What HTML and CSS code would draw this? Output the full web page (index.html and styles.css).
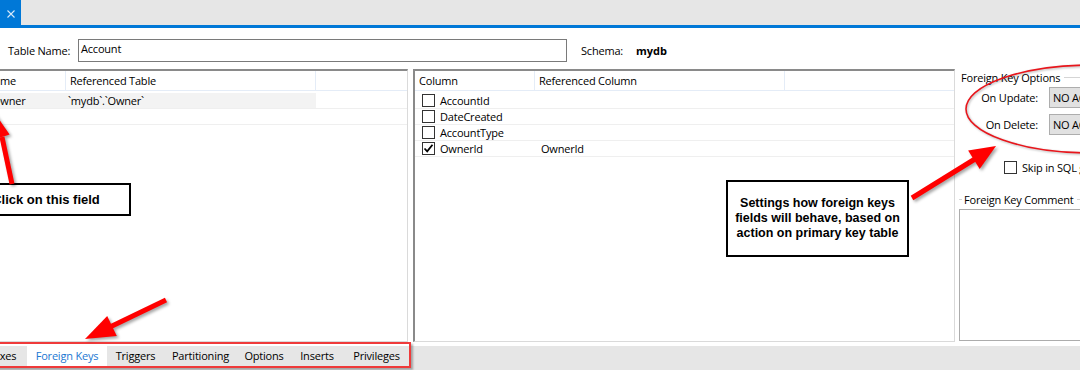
FILE: index.html
```html
<!DOCTYPE html>
<html>
<head>
<meta charset="utf-8">
<title>Table Editor</title>
<link rel="stylesheet" href="styles.css">
</head>
<body>
<div class="app">
  <div class="doc-strip">
    <div class="doc-tab">
      <svg class="close-x" width="8" height="8" viewBox="0 0 8 8"><path d="M0.5 0.5L7.5 7.5M7.5 0.5L0.5 7.5"/></svg>
    </div>
  </div>
  <div class="accent"></div>

  <div class="name-bar">
    <span class="name-lbl">Table Name:</span>
    <div class="text-input">Account</div>
    <span class="schema-lbl">Schema:</span>
    <span class="schema-val">mydb</span>
  </div>

  <div class="main">
    <div class="grid left-grid">
      <div class="grid-head">
        <div class="cell lc-name">Name</div>
        <div class="cell lc-ref">Referenced Table</div>
        <div class="cell c-fill"></div>
      </div>
      <div class="grid-body">
        <div class="grid-row">
          <div class="cell lc-name sel"><span class="fk-name">Owner</span></div>
          <div class="cell lc-ref sel row-ref">`mydb`.`Owner`</div>
          <div class="cell c-fill"></div>
        </div>
        <div class="grid-row">
          <div class="cell lc-name"></div>
          <div class="cell lc-ref"></div>
          <div class="cell c-fill"></div>
        </div>
      </div>
    </div>

    <div class="grid mid-grid">
      <div class="grid-head">
        <div class="cell mc-col">Column</div>
        <div class="cell mc-ref">Referenced Column</div>
        <div class="cell c-fill"></div>
      </div>
      <div class="grid-body">
        <div class="grid-row">
          <div class="cell mc-col"><span class="chk"></span>AccountId</div>
          <div class="cell mc-ref"></div>
          <div class="cell c-fill"></div>
        </div>
        <div class="grid-row">
          <div class="cell mc-col"><span class="chk"></span>DateCreated</div>
          <div class="cell mc-ref"></div>
          <div class="cell c-fill"></div>
        </div>
        <div class="grid-row">
          <div class="cell mc-col"><span class="chk"></span>AccountType</div>
          <div class="cell mc-ref"></div>
          <div class="cell c-fill"></div>
        </div>
        <div class="grid-row">
          <div class="cell mc-col"><span class="chk checked"><svg width="11" height="11" viewBox="0 0 11 11"><path d="M1.5 5.5L4.2 8.3L9.5 1.8"/></svg></span>OwnerId</div>
          <div class="cell mc-ref">OwnerId</div>
          <div class="cell c-fill"></div>
        </div>
      </div>
    </div>

    <div class="side">
      <div class="legend-row">
        <span class="legend-text">Foreign Key Options</span>
        <span class="legend-line"></span>
      </div>
      <div class="opt-row first">
        <span class="opt-lbl">On Update:</span>
        <div class="combo">NO ACTION</div>
      </div>
      <div class="opt-row">
        <span class="opt-lbl">On Delete:</span>
        <div class="combo">NO ACTION</div>
      </div>
      <div class="skip-row">
        <span class="chk"></span>
        <span class="skip-text">Skip in SQL generation</span>
      </div>
      <div class="legend-row comment-legend">
        <span class="legend-dash"></span>
        <span class="legend-text">Foreign Key Comment</span>
        <span class="legend-line"></span>
      </div>
      <div class="comment-box"></div>
    </div>
  </div>

  <div class="tabbar">
    <div class="tab t-idx">Indexes</div>
    <div class="tab t-fk active">Foreign Keys</div>
    <div class="tab t-trg">Triggers</div>
    <div class="tab t-part">Partitioning</div>
    <div class="tab t-opt">Options</div>
    <div class="tab t-ins">Inserts</div>
    <div class="tab t-priv">Privileges</div>
  </div>

  <!-- annotations drawn over the screenshot -->
  <div class="tab-highlight"></div>
  <div class="callout callout-click">Click on this field</div>
  <div class="callout callout-settings">Settings how foreign keys<br>fields will behave, based on<br>action on primary key table</div>

  <svg class="anno" width="1080" height="370" viewBox="0 0 1080 370">
    <ellipse class="ring" cx="1092" cy="109" rx="126" ry="44"/>
    <g class="arrow">
      <line x1="12" y1="184" x2="2" y2="137"/>
      <polygon points="-6,112 9.6,134.6 -5.6,139.4"/>
    </g>
    <g class="arrow">
      <line x1="912" y1="198" x2="975" y2="159"/>
      <polygon points="996,146 979.7,169.1 968.1,150.4"/>
    </g>
    <g class="arrow">
      <line x1="166" y1="300" x2="111" y2="326.5"/>
      <polygon points="85,339 116.8,335.9 107.2,316.1"/>
    </g>
  </svg>
</div>
</body>
</html>
```

FILE: styles.css
```css
* { box-sizing: border-box; }

html, body {
  margin: 0;
  padding: 0;
  width: 1080px;
  height: 370px;
  overflow: hidden;
  background: #ffffff;
}

body {
  font-family: "Open Sans", "Noto Sans", sans-serif;
  font-size: 11px;
  letter-spacing: -0.2px;
  color: #000;
}

.app {
  position: relative;
  width: 1080px;
  height: 370px;
  overflow: hidden;
}

/* ---------- top document strip ---------- */
.doc-strip {
  height: 25px;
  background: #e6e6e6;
  display: flex;
}
.doc-tab {
  width: 21px;
  background: #0078d7;
  display: flex;
  align-items: center;
  justify-content: center;
  padding-top: 3px;
}
.close-x path {
  stroke: #d8eafa;
  stroke-width: 1.1;
  fill: none;
}
.accent {
  height: 3px;
  background: #0078d7;
}

/* ---------- table name row ---------- */
.name-bar {
  height: 41px;
  padding-top: 4px;
  padding-left: 8px;
  display: flex;
  align-items: center;
}
.name-lbl {
  width: 70px;
}
.text-input {
  width: 489px;
  height: 23px;
  border: 1px solid #7a7a7a;
  padding: 1px 2px;
  line-height: 16px;
  align-self: center;
}
.schema-lbl {
  margin-left: 14px;
  width: 55px;
}
.schema-val {
  font-weight: bold;
  letter-spacing: 0;
}

/* ---------- main panes ---------- */
.main {
  height: 273px;
  display: flex;
  margin-left: -20px;
}

.grid {
  flex: none;
  border-top: 2px solid #8a8a8a;
  border-left: 2px solid #8a8a8a;
  border-right: 1px solid #dadada;
  border-bottom: 1px solid #dadada;
  display: flex;
  flex-direction: column;
}
.left-grid { width: 428px; }
.mid-grid { width: 542px; margin-left: 5px; }

.grid-head {
  display: flex;
  height: 20px;
  border-bottom: 1px solid #e4ecf7;
}
.grid-head .cell {
  border-right: 1px solid #e4ecf7;
  padding-left: 4px;
  line-height: 19px;
}
.grid-head .c-fill { border-right: none; }

.grid-body { padding-top: 2px; }
.grid-row {
  display: flex;
  height: 16px;
  border-bottom: 1px solid #efefef;
}
.grid-row .cell {
  line-height: 15px;
  display: flex;
  align-items: center;
  white-space: nowrap;
}

.cell { flex: none; overflow: hidden; white-space: nowrap; }
.c-fill { flex: 1; }

.lc-name { width: 84px; }
.lc-ref { width: 250px; }
.grid-head .lc-ref { padding-left: 4px; }
.fk-name { padding-left: 10px; }
.row-ref { padding-left: 2px; }
.sel { background: #f3f3f3; }

.mc-col { width: 120px; }
.mc-ref { width: 250px; }
.grid-row .mc-col { padding-left: 7px; }
.grid-row .mc-ref { padding-left: 6px; }

.chk {
  flex: none;
  width: 13px;
  height: 13px;
  border: 1px solid #333;
  background: #fff;
  margin-right: 5px;
  display: inline-flex;
  align-items: center;
  justify-content: center;
}
.chk svg path {
  fill: none;
  stroke: #000;
  stroke-width: 1.8;
}

/* ---------- side options ---------- */
.side {
  flex: none;
  width: 230px;
  padding-left: 6px;
  display: flex;
  flex-direction: column;
}
.legend-row {
  height: 16px;
  display: flex;
  align-items: center;
}
.legend-line {
  flex: 1;
  height: 1px;
  background: #d5d5d5;
  margin-left: 4px;
}
.legend-dash {
  width: 3px;
  height: 1px;
  background: #d5d5d5;
  margin-left: -2px;
  margin-right: 2px;
}
.opt-row {
  display: flex;
  align-items: center;
  height: 21px;
  margin-top: 6px;
}
.opt-row.first { margin-top: 2px; }
.opt-lbl {
  width: 77px;
  text-align: right;
}
.combo {
  margin-left: 11px;
  width: 120px;
  height: 21px;
  background: #e1e1e1;
  border: 1px solid #adadad;
  padding-left: 3px;
  line-height: 19px;
  white-space: nowrap;
}
.skip-row {
  display: flex;
  align-items: center;
  margin-top: 26px;
  margin-left: 43px;
  height: 13px;
  white-space: nowrap;
}
.skip-row .chk { border-color: #333; }
.comment-legend {
  margin-top: 18px;
  height: 14px;
}
.comment-legend .legend-line { margin-left: 3px; }
.comment-box {
  margin-top: 3px;
  margin-left: -2px;
  height: 132px;
  border: 1px solid #acacac;
  background: #fff;
}

/* ---------- bottom tabs ---------- */
.tabbar {
  margin-top: 4px;
  margin-left: -33px;
  height: 24px;
  background: #e6e6e6;
  display: flex;
  width: 1113px;
}
.tab {
  flex: none;
  height: 20px;
  line-height: 20px;
  text-align: center;
  white-space: nowrap;
}
.tab.active {
  background: #ffffff;
  color: #1c77d2;
  margin-top: -1px;
  height: 21px;
  line-height: 22px;
}
.t-idx { width: 60px; }
.t-fk { width: 80px; }
.t-trg { width: 57px; }
.t-part { width: 73px; }
.t-opt { width: 54px; }
.t-ins { width: 52px; }
.t-priv { width: 67px; }

/* ---------- annotations ---------- */
.tab-highlight {
  position: absolute;
  left: -5px;
  top: 342px;
  width: 416px;
  height: 26px;
  border: 2px solid #ef3a3a;
  box-shadow: 2px 2px 2px rgba(0,0,0,0.3);
}
.callout {
  position: absolute;
  background: #fff;
  border: 2px solid #000;
  font-family: "Liberation Sans", Arial, sans-serif;
  font-weight: bold;
  letter-spacing: 0;
  color: #000;
  display: flex;
  align-items: center;
  justify-content: center;
  text-align: center;
  white-space: nowrap;
}
.callout-click {
  left: -39px;
  top: 183px;
  width: 170px;
  height: 33px;
  font-size: 13px;
}
.callout-settings {
  left: 726px;
  top: 180px;
  width: 183px;
  height: 77px;
  font-size: 12.5px;
  line-height: 15px;
}
.anno {
  position: absolute;
  left: 0;
  top: 0;
  pointer-events: none;
  overflow: visible;
}
.ring {
  fill: none;
  stroke: #e8161c;
  stroke-width: 1.6;
  filter: drop-shadow(1px 1px 1px rgba(0,0,0,0.3));
}
.arrow {
  filter: drop-shadow(2px 2px 1.5px rgba(0,0,0,0.35));
}
.arrow line {
  stroke: #ff0000;
  stroke-width: 5;
}
.arrow polygon {
  fill: #ff0000;
}
```
